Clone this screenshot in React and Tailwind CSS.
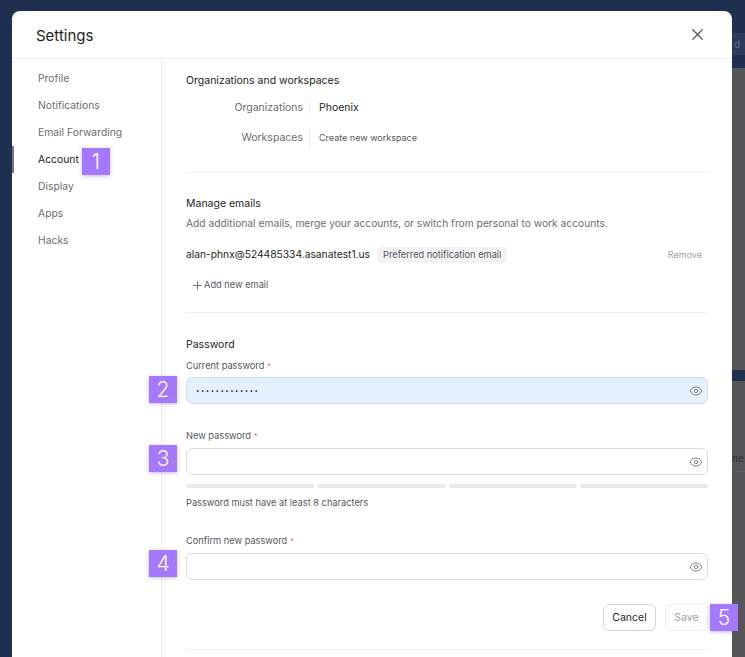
import { Eye, Plus, X } from "lucide-react";

const navItems = ["Profile", "Notifications", "Email Forwarding", "Account", "Display", "Apps", "Hacks"];

const Badge = ({ n, className = "" }) => (
  <div className={`w-7 h-[27px] shrink-0 bg-[#a478ff] text-white text-[21px] font-light leading-[27px] text-center shadow-[0_1px_4px_rgba(90,60,160,0.35)] ${className}`}>
    {n}
  </div>
);

const Label = ({ children }) => (
  <div className="h-3.5 text-[9.25px] leading-[14px] text-[#55585c]">
    {children} <span className="text-[8px] text-[#f2668b]">*</span>
  </div>
);

const PasswordField = ({ n, filled, badgeClass }) => (
  <div className="relative">
    <div className={`h-[27px] rounded-md border pl-[9px] flex items-center ${filled ? "bg-[#e5effd] border-[#d7deea]" : "bg-white border-[#dcdcdd]"}`}>
      <span className="text-[6px] leading-none tracking-[1.5px] text-[#1e1f21]">{filled ? "•••••••••••••" : ""}</span>
      <Eye size={14} strokeWidth={1.4} className="text-[#6d6e6f] absolute right-[5px]" />
    </div>
    <Badge n={n} className={`absolute left-[-37px] ${badgeClass}`} />
  </div>
);

export default function App() {
  return (
    <div className="h-[657px] w-[745px] overflow-hidden bg-[#1e2f50] font-['Inter','Liberation_Sans',sans-serif] pl-3 pt-[11px] flex">
      <div className="relative z-10 w-[720px] h-[646px] bg-white rounded-t-lg flex flex-col shrink-0">
        <div className="h-[48px] shrink-0 border-b border-[#edeeee] flex items-center justify-between pl-6 pr-[25px]">
          <h1 className="pt-[3px] text-[15px] font-normal text-[#1e1f21]">Settings</h1>
          <X size={19} strokeWidth={1.5} className="text-[#55585c]" />
        </div>

        <div className="flex flex-1 min-h-0">
          {/* Sidebar */}
          <div className="w-[150px] shrink-0 border-r border-[#edeeee] pt-[6px]">
            {navItems.map((item) => (
              <div
                key={item}
                className={`relative h-[27px] pt-px pl-[26px] flex items-center text-[10.35px] ${item === "Account" ? "text-[#1e1f21]" : "text-[#6d6e6f]"}`}
              >
                {item === "Account" && <div className="absolute left-0 top-0 h-[27px] w-0.5 bg-[#76787a]" />}
                {item}
                {item === "Account" && <Badge n={1} className="absolute left-[70px] top-[2px]" />}
              </div>
            ))}
          </div>

          {/* Content */}
          <div className="flex-1 pl-6 pr-6 pt-[15px] min-w-0">
            <h2 className="text-[10.5px] leading-[14px] text-[#1e1f21]">Organizations and workspaces</h2>
            <div className="mt-[10px] grid grid-cols-[124px_1fr] gap-y-2.5 items-center">
              <div className="text-[10.5px] text-right text-[#6d6e6f] h-[20px] leading-[20px] pr-[6px] border-r border-[#edeeee]">Organizations</div>
              <div className="text-[10.5px] text-[#1e1f21] pl-[9px] leading-[20px]">Phoenix</div>
              <div className="text-[10.5px] text-right text-[#6d6e6f] h-[20px] leading-[20px] pr-[6px] border-r border-[#edeeee]">Workspaces</div>
              <div className="text-[9px] text-[#55585c] pl-[9px] leading-[20px]">Create new workspace</div>
            </div>

            <div className="mt-6 border-t border-[#edeeee] pt-6">
              <h2 className="text-[10.5px] leading-[14px] text-[#1e1f21]">Manage emails</h2>
              <p className="mt-[5px] text-[10.25px] leading-[14px] text-[#6d6e6f]">
                Add additional emails, merge your accounts, or switch from personal to work accounts.
              </p>
              <div className="mt-[15px] h-[20px] flex items-center">
                <span className="text-[10.25px] text-[#1e1f21]">alan-phnx@524485334.asanatest1.us</span>
                <span className="ml-[7px] h-4 px-1.5 rounded-sm bg-[#f1f2f3] text-[9.25px] leading-4 text-[#55585c]">Preferred notification email</span>
                <span className="ml-auto mr-1.5 text-[9px] text-[#a2a0a2]">Remove</span>
              </div>
              <div className="mt-2.5 pl-[5px] h-[20px] flex items-center text-[9.25px] text-[#55585c]">
                <Plus size={13} strokeWidth={1.5} />
                Add new email
              </div>
            </div>

            <div className="mt-[17px] border-t border-[#edeeee] pt-[25px]">
              <h2 className="text-[10.5px] leading-[14px] text-[#1e1f21]">Password</h2>
              <div className="mt-[7px]"><Label>Current password</Label></div>
              <div className="mt-1"><PasswordField n={2} filled badgeClass="top-[-1px]" /></div>

              <div className="mt-[25px]"><Label>New password</Label></div>
              <div className="mt-[5px]"><PasswordField n={3} badgeClass="top-[-3px]" /></div>
              <div className="mt-[9px] grid grid-cols-4 gap-[3px]">
                <div className="h-1 rounded-full bg-[#e8e9ea]" />
                <div className="h-1 rounded-full bg-[#e8e9ea]" />
                <div className="h-1 rounded-full bg-[#e8e9ea]" />
                <div className="h-1 rounded-full bg-[#e8e9ea]" />
              </div>
              <div className="mt-[8px] text-[9.25px] leading-[14px] text-[#55585c]">Password must have at least 8 characters</div>

              <div className="mt-6"><Label>Confirm new password</Label></div>
              <div className="mt-[5px]"><PasswordField n={4} badgeClass="top-[-3px]" /></div>

              <div className="relative mt-6 flex justify-end gap-[9px]">
                <button className="h-[27px] w-[53px] rounded-md border border-[#d5d5d6] text-[10.5px] text-[#1e1f21]">Cancel</button>
                <button className="h-[27px] w-[43px] rounded-md border border-[#edeeee] text-[10.5px] text-[#a2a0a2]">Save</button>
                <Badge n={5} className="absolute right-[-30px] top-0" />
              </div>

              <div className="mt-[18px] border-t border-[#edeeee]" />
            </div>
          </div>
        </div>
      </div>

      {/* What shows of the page behind the modal */}
      <div className="-mt-[11px] w-[13px] shrink-0 flex flex-col text-[10px] overflow-hidden">
        <div className="h-[33px]" />
        <div className="h-[22px] bg-[#2a3a59] pl-0.5 leading-[22px] text-[#5f6b82]">d</div>
        <div className="h-[13px]" />
        <div className="h-[302px] bg-[#555658]" />
        <div className="h-[11px]" />
        <div className="h-[91px] bg-[#555658] border-b border-[#5f6062] text-[#2e2f31] leading-[154px] whitespace-nowrap overflow-hidden">ne</div>
        <div className="flex-1 bg-[#555658]" />
      </div>
    </div>
  );
}
